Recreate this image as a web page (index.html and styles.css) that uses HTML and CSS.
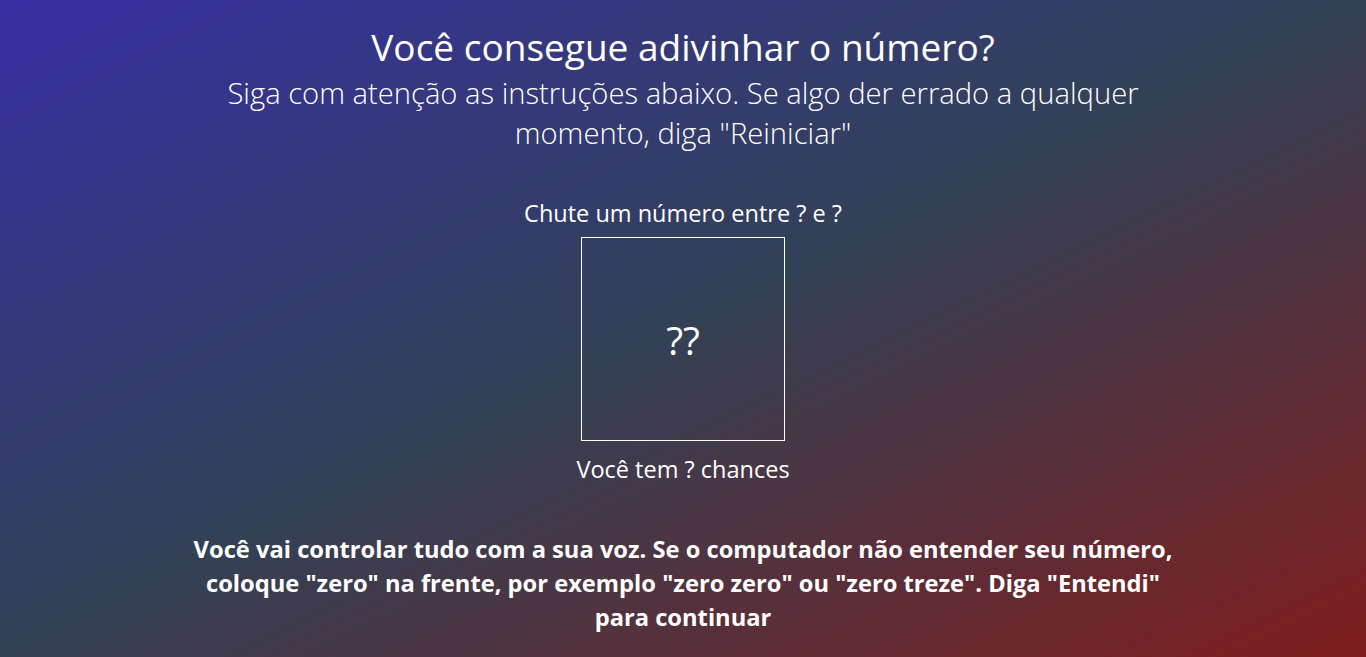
FILE: index.html
```html
<!DOCTYPE html>
<html lang="pt-BR">
<head>
<meta charset="utf-8">
<title>Você consegue adivinhar o número?</title>
<link rel="stylesheet" href="styles.css">
</head>
<body>
<main class="page">
  <h1 class="title">Você consegue adivinhar o número?</h1>
  <p class="subtitle">Siga com atenção as instruções abaixo. Se algo der errado a qualquer momento, diga "Reiniciar"</p>
  <section class="game">
    <p class="range">Chute um número entre ? e ?</p>
    <div class="guess-box">??</div>
    <p class="chances">Você tem ? chances</p>
  </section>
  <p class="instructions">Você vai controlar tudo com a sua voz. Se o computador não entender seu número, coloque "zero" na frente, por exemplo "zero zero" ou "zero treze". Diga "Entendi" para continuar</p>
</main>
</body>
</html>
```
FILE: styles.css
```css
* { box-sizing: border-box; }
html, body { margin: 0; padding: 0; }
body {
  min-height: 100vh;
  background: linear-gradient(to bottom right, #3730a3, #334155, #7f1d1d);
  color: #fff;
  font-family: "Open Sans", "Noto Sans", sans-serif;
  overflow: hidden;
}
.page {
  display: flex;
  flex-direction: column;
  align-items: center;
  text-align: center;
  padding-top: 27px;
}
.title {
  margin: 0;
  font-size: 37px;
  font-weight: 400;
  line-height: 40px;
}
.subtitle {
  margin: 6px 0 0;
  max-width: 960px;
  font-size: 29.2px;
  font-weight: 300;
  line-height: 40px;
}
.game {
  margin-top: 46px;
  display: flex;
  flex-direction: column;
  align-items: center;
}
.range, .chances {
  margin: 0;
  font-size: 23.5px;
  line-height: 28px;
}
.guess-box {
  margin-top: 10px;
  width: 204px;
  height: 204px;
  border: 1px solid #fff;
  display: flex;
  align-items: center;
  justify-content: center;
  font-size: 39px;
}
.chances { margin-top: 14px; }
.instructions {
  margin: 49px 0 0;
  max-width: 992px;
  font-size: 23.7px;
  font-weight: 700;
  line-height: 34px;
}
```
